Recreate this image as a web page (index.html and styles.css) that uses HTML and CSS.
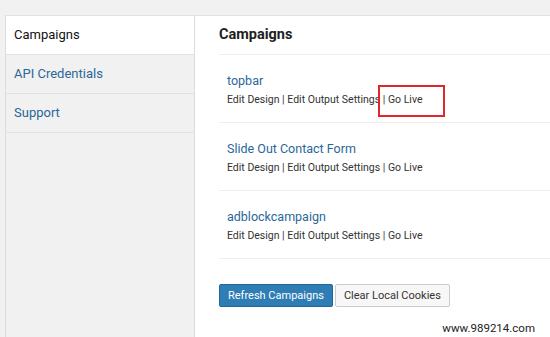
FILE: index.html
```html
<!DOCTYPE html>
<html lang="en">
<head>
    <meta charset="UTF-8">
    <meta name="viewport" content="width=device-width, initial-scale=1.0">
    <title>Campaigns</title>
    <link rel="stylesheet" href="styles.css">
</head>
<body>
    <div class="panel">
        <ul class="sidebar">
            <li class="current">Campaigns</li>
            <li><a href="#">API Credentials</a></li>
            <li><a href="#">Support</a></li>
        </ul>
        <div class="main">
            <h2>Campaigns</h2>
            <div class="campaign">
                <a class="title" href="#">topbar</a>
                <p class="actions">Edit Design | Edit Output Settings <span class="highlight">| Go Live</span></p>
            </div>
            <div class="campaign">
                <a class="title" href="#">Slide Out Contact Form</a>
                <p class="actions">Edit Design | Edit Output Settings | Go Live</p>
            </div>
            <div class="campaign">
                <a class="title" href="#">adblockcampaign</a>
                <p class="actions">Edit Design | Edit Output Settings | Go Live</p>
            </div>
            <div class="buttons">
                <button class="primary">Refresh Campaigns</button>
                <button>Clear Local Cookies</button>
            </div>
        </div>
    </div>
    <div class="watermark">www.989214.com</div>
</body>
</html>
```

FILE: styles.css
```css
body {
    margin: 0;
    padding: 15px 0 0 5px;
    height: 337px;
    box-sizing: border-box;
    background: #f1f1f1;
    font-family: Roboto, "Liberation Sans", Arial, sans-serif;
    overflow: hidden;
}
.panel {
    display: flex;
    height: 100%;
    border-top: 1px solid #e2e2e2;
    border-left: 1px solid #dcdcdc;
    background: white;
}
.sidebar {
    list-style: none;
    margin: 0;
    padding: 0;
    width: 188px;
    background: #f1f1f1;
    border-right: 1px solid #dcdcdc;
}
.sidebar li {
    height: 38px;
    line-height: 38px;
    padding-left: 8px;
    font-size: 13px;
    border-bottom: 1px solid #e2e2e2;
}
.sidebar li.current {
    background: white;
    color: #111;
}
.sidebar a, .campaign .title {
    color: #2a679a;
    text-decoration: none;
}
.main {
    flex: 1;
    padding-left: 24px;
}
.main h2 {
    margin: 0;
    height: 38px;
    line-height: 38px;
    font-size: 14.5px;
    font-weight: bold;
    color: #1e1e1e;
    border-bottom: 1px solid #eeeeee;
}
.campaign {
    height: 50px;
    padding: 17px 0 0 8px;
    border-bottom: 1px solid #eeeeee;
}
.campaign .title {
    display: block;
    font-size: 12.5px;
    line-height: 18px;
}
.actions {
    margin: 2px 0 0;
    font-size: 10.5px;
    line-height: 16px;
    color: #333;
}
.highlight {
    position: relative;
}
.highlight::after {
    content: "";
    position: absolute;
    left: -5px;
    top: -8px;
    width: 63px;
    height: 28px;
    border: 2px solid #e0262b;
}
.buttons {
    display: flex;
    gap: 2px;
    margin-top: 25px;
}
button {
    height: 23px;
    padding: 0 8px;
    border-radius: 2px;
    border: 1px solid #cccccc;
    background: #f7f7f7;
    color: #333;
    font-family: inherit;
    font-size: 11px;
    cursor: pointer;
}
button.primary {
    background: #2e7db5;
    border-color: #1f6898;
    color: white;
}
.watermark {
    position: absolute;
    right: 15px;
    bottom: 2px;
    font-size: 11.5px;
    color: #222;
}
```
